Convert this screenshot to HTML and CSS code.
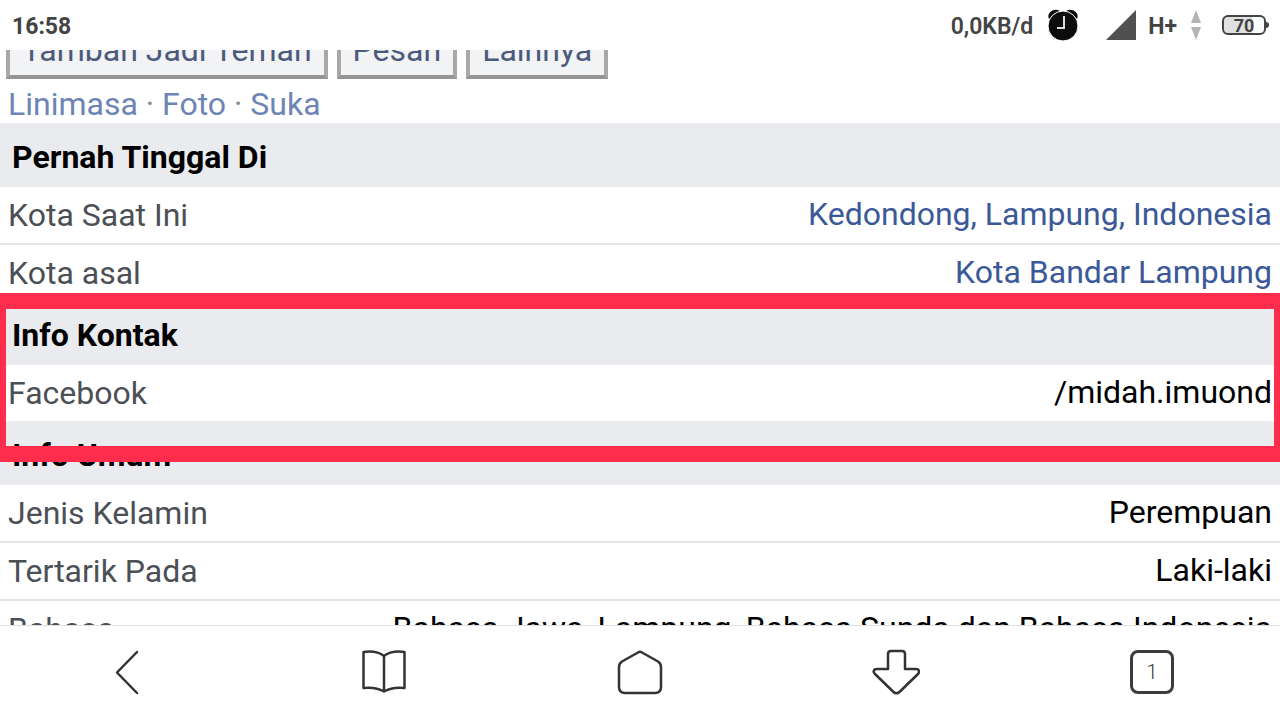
FILE: index.html
```html
<!DOCTYPE html>
<html lang="id">
<head>
  <meta charset="UTF-8">
  <meta name="viewport" content="width=device-width, initial-scale=1.0">
  <title>Profil</title>
  <link rel="stylesheet" href="styles.css">
</head>
<body>
  <header class="status-bar">
    <span class="clock">16:58</span>
    <span class="speed">0,0KB/d</span>
    <svg class="alarm" width="32" height="34" viewBox="0 0 32 34">
      <path d="M2 11C-1 5 7-1 13 3zM30 11C33 5 25-1 19 3z" fill="#0c0c0c"/>
      <circle cx="16" cy="18" r="15" fill="#0c0c0c" stroke="#fff" stroke-width="1"/>
      <path d="M17 8v12h-7" fill="none" stroke="#ddd" stroke-width="2"/>
    </svg>
    <svg class="signal" width="30" height="30" viewBox="0 0 30 30">
      <path d="M30 0v30H0z" fill="#505050"/>
    </svg>
    <span class="network">H+</span>
    <svg class="traffic" width="10" height="30" viewBox="0 0 10 30">
      <path d="M5 0l5 13H0zM0 17h10L5 30z" fill="#b3b3b3"/>
    </svg>
    <span class="battery">70</span>
  </header>

  <main class="page">
    <div class="actions">
      <button class="action">Tambah Jadi Teman</button>
      <button class="action">Pesan</button>
      <button class="action">Lainnya</button>
    </div>
    <nav class="tabs">
      <a href="#">Linimasa</a> · <a href="#">Foto</a> · <a href="#">Suka</a>
    </nav>

    <section>
      <h2>Pernah Tinggal Di</h2>
      <table>
        <tr><th scope="row">Kota Saat Ini</th><td><a href="#">Kedondong, Lampung, Indonesia</a></td></tr>
        <tr><th scope="row">Kota asal</th><td><a href="#">Kota Bandar Lampung</a></td></tr>
      </table>
    </section>

    <section class="marked">
      <h2>Info Kontak</h2>
      <table>
        <tr><th scope="row">Facebook</th><td>/midah.imuond</td></tr>
      </table>
    </section>

    <section>
      <h2>Info Umum</h2>
      <table>
        <tr><th scope="row">Jenis Kelamin</th><td>Perempuan</td></tr>
        <tr><th scope="row">Tertarik Pada</th><td>Laki-laki</td></tr>
        <tr><th scope="row">Bahasa</th><td>Bahasa Jawa, Lampung, Bahasa Sunda dan Bahasa Indonesia</td></tr>
      </table>
    </section>
  </main>

  <nav class="toolbar">
    <button aria-label="Kembali">
      <svg width="48" height="48" viewBox="0 0 48 48"><path d="M33 4L13 24.500L33 45"/></svg>
    </button>
    <button aria-label="Bookmark">
      <svg width="48" height="48" viewBox="0 0 48 48"><path d="M24 8C19 4 11 3 3.500 4V40C11 39 18 40 24 43.500C30 40 37 39 44.500 40V4C37 3 29 4 24 8zM24 8V43"/></svg>
    </button>
    <button aria-label="Beranda">
      <svg width="48" height="48" viewBox="0 0 48 48"><path d="M22 4.500Q24 3 26 4.500L42 13.500Q45 15.500 45 19V39Q45 45 39 45H9Q3 45 3 39V19Q3 15.500 6 13.500z"/></svg>
    </button>
    <button aria-label="Unduhan">
      <svg width="48" height="48" viewBox="0 0 48 48"><path d="M16 21V6Q16 3 19 3H30Q33 3 33 6V21H44Q47 21 47 23.500Q47 25 46 26L28 43.500Q24.500 47 21 43.500L3 26Q1 24 2 22.500Q2.500 21 5 21z"/></svg>
    </button>
    <button aria-label="Tab terbuka"><span class="tab-count">1</span></button>
  </nav>
</body>
</html>
```
FILE: styles.css
```css
* {
  box-sizing: border-box;
}

body {
  display: flex;
  flex-direction: column;
  height: 100vh;
  margin: 0;
  background-color: #fff;
  font-family: Roboto, sans-serif;
  font-size: 32px;
  line-height: 40px;
}

a {
  color: #3b5998;
  text-decoration: none;
}

/* status bar */
.status-bar {
  display: flex;
  align-items: center;
  flex: none;
  height: 50px;
  padding: 0 14px 0 12px;
  background-color: #fff;
  color: #444;
  font-size: 23px;
  font-weight: bold;
  line-height: 28px;
}

.clock,
.speed,
.network {
  padding-top: 3px;
}

.clock {
  margin-right: auto;
}

.speed {
  font-weight: 600;
}

.alarm {
  margin: 0 27px 0 14px;
}

.signal {
  margin-right: 12px;
}

.traffic {
  margin: 0 21px 0 14px;
}

.battery {
  position: relative;
  width: 44px;
  height: 20px;
  border: 2px solid #444;
  border-radius: 6px;
  background: linear-gradient(to right, #e0e0e0 70%, #fff 70%);
  font-size: 18px;
  line-height: 17px;
  text-align: center;
}

.battery::after {
  content: "";
  position: absolute;
  top: 5px;
  right: -5px;
  width: 3px;
  height: 6px;
  border-radius: 0 3px 3px 0;
  background-color: #444;
}

/* profile page, scrolled down a little */
.page {
  flex: 1;
  min-height: 0;
  overflow: hidden;
}

.actions {
  display: flex;
  gap: 9px;
  margin-top: -27px;
  padding: 0 6px;
}

.action {
  height: 56px;
  padding: 0 12px 2px;
  border: 4px solid #a8a8a8;
  border-bottom-color: #959595;
  background-color: #f2f3f5;
  color: #4b5a7c;
  font: inherit;
}

.tabs {
  height: 44px;
  padding: 5px 8px 0;
  color: #888;
}

.tabs a {
  color: #6d84b4;
}

h2 {
  margin: 0;
  padding: 14px 12px 10px;
  background-color: #e9ebee;
  font-size: 32px;
  line-height: 40px;
}

table {
  width: 100%;
  border-spacing: 0;
}

th,
td {
  padding: 8px;
  border-bottom: 2px solid #e5e5e5;
}

tr:last-child th,
tr:last-child td {
  border-bottom: none;
}

th {
  color: #4b4f56;
  font-weight: normal;
  text-align: left;
}

td {
  padding: 7px 8px 9px;
  text-align: right;
  vertical-align: top;
}

.marked {
  position: relative;
}

.marked::after {
  content: "";
  position: absolute;
  inset: -8px 0 -41px;
  border: solid #ff2d4b;
  border-width: 16px 6px;
  pointer-events: none;
}

/* browser toolbar */
.toolbar {
  display: flex;
  flex: none;
  height: 95px;
  padding-bottom: 2px;
  border-top: 1px solid #e0e0e0;
  background-color: #fff;
}

.toolbar button {
  display: flex;
  flex: 1;
  align-items: center;
  justify-content: center;
  padding: 0;
  border: none;
  background: none;
}

.toolbar svg {
  fill: none;
  stroke: #333;
  stroke-width: 2.5;
  stroke-linecap: round;
  stroke-linejoin: round;
}

.tab-count {
  width: 44px;
  height: 44px;
  border: 3px solid #3c3c3c;
  border-radius: 8px;
  color: #333;
  font-family: Roboto, sans-serif;
  font-size: 20px;
  font-weight: 300;
  line-height: 38px;
}
```
